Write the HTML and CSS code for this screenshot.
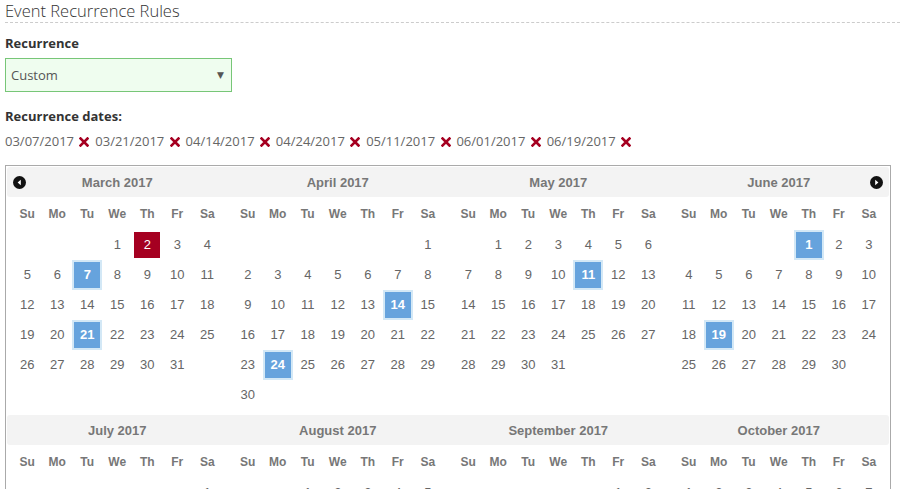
FILE: index.html
```html
<!DOCTYPE html>
<html lang="en">
<head>
    <meta charset="UTF-8">
    <meta name="viewport" content="width=device-width, initial-scale=1.0">
    <title>Event Recurrence Rules</title>
    <link rel="stylesheet" href="styles.css">
</head>
<body>
    <div class="page">
        <h3 class="section-title">Event Recurrence Rules</h3>

        <div class="field">
            <label class="field-label">Recurrence</label>
            <div class="select-box">
                <span>Custom</span>
                <span class="select-arrow">&#9660;</span>
            </div>
        </div>

        <div class="field">
            <label class="field-label">Recurrence dates:</label>
            <div class="date-list" id="date-list"></div>
        </div>

        <div class="datepicker" id="datepicker"></div>
    </div>

    <script>
        const selected = ['03/07/2017', '03/21/2017', '04/14/2017', '04/24/2017', '05/11/2017', '06/01/2017', '06/19/2017'];
        const today = '03/02/2017';
        const monthNames = ['January', 'February', 'March', 'April', 'May', 'June', 'July', 'August', 'September', 'October', 'November', 'December'];
        const dayNames = ['Su', 'Mo', 'Tu', 'We', 'Th', 'Fr', 'Sa'];

        const removeIcon = '<svg class="remove" width="10" height="10" viewBox="0 0 10 10"><path d="M1.5 1.5L8.5 8.5M8.5 1.5L1.5 8.5" stroke="#a50021" stroke-width="2.6" stroke-linecap="square"/></svg>';
        const prevIcon = '<svg width="13" height="13" viewBox="0 0 13 13"><circle cx="6.5" cy="6.5" r="6.5" fill="#111"/><path d="M7.8 3.8L4.6 6.5L7.8 9.2Z" fill="#fff"/></svg>';
        const nextIcon = '<svg width="13" height="13" viewBox="0 0 13 13"><circle cx="6.5" cy="6.5" r="6.5" fill="#111"/><path d="M5.2 3.8L8.4 6.5L5.2 9.2Z" fill="#fff"/></svg>';

        document.getElementById('date-list').innerHTML = selected
            .map(d => `<span class="date-item">${d} ${removeIcon}</span>`)
            .join(' ');

        function pad(n) {
            return n < 10 ? '0' + n : '' + n;
        }

        function buildMonth(year, month, pos) {
            const first = new Date(year, month, 1).getDay();
            const total = new Date(year, month + 1, 0).getDate();
            let cells = [];
            for (let i = 0; i < first; i++) cells.push('<td></td>');
            for (let d = 1; d <= total; d++) {
                const key = `${pad(month + 1)}/${pad(d)}/${year}`;
                let cls = '';
                if (selected.includes(key)) cls = 'selected';
                if (key === today) cls = 'today';
                cells.push(`<td><span class="day ${cls}">${d}</span></td>`);
            }
            let rows = '';
            for (let i = 0; i < cells.length; i += 7) {
                rows += '<tr>' + cells.slice(i, i + 7).join('') + '</tr>';
            }
            let nav = '';
            if (pos === 'first') nav = `<span class="nav nav-prev">${prevIcon}</span>`;
            if (pos === 'last') nav = `<span class="nav nav-next">${nextIcon}</span>`;
            return `
                <div class="month">
                    <div class="month-header">${nav}${monthNames[month]} ${year}</div>
                    <table class="month-table">
                        <thead><tr>${dayNames.map(n => `<th>${n}</th>`).join('')}</tr></thead>
                        <tbody>${rows}</tbody>
                    </table>
                </div>`;
        }

        let html = '';
        for (let r = 0; r < 2; r++) {
            html += '<div class="month-row">';
            for (let c = 0; c < 4; c++) {
                const m = 2 + r * 4 + c;
                let pos = '';
                if (r === 0 && c === 0) pos = 'first';
                if (r === 0 && c === 3) pos = 'last';
                html += buildMonth(2017, m, pos);
            }
            html += '</div>';
        }
        document.getElementById('datepicker').innerHTML = html;
    </script>
</body>
</html>
```

FILE: styles.css
```css
body {
    margin: 0;
    font-family: "Open Sans", "Liberation Sans", Arial, sans-serif;
    font-size: 13px;
    color: #333;
    background-color: #fff;
}

.page {
    padding-left: 5px;
}

.section-title {
    margin: 0;
    font-size: 16.5px;
    font-weight: 300;
    line-height: 22px;
    color: #333;
    border-bottom: 1px dashed #ccc;
}

.field {
    margin-top: 11px;
}

.field + .field {
    margin-top: 15px;
}

.field-label {
    display: block;
    font-weight: bold;
    line-height: 18px;
    color: #333;
}

/* 下拉選單 */
.select-box {
    display: flex;
    justify-content: space-between;
    align-items: center;
    width: 227px;
    height: 34px;
    margin-top: 6px;
    padding: 0 7px 0 5px;
    box-sizing: border-box;
    background-color: #effdef;
    border: 1px solid #77c677;
    color: #555;
}

.select-arrow {
    font-size: 9px;
    color: #555;
    font-family: "DejaVu Sans", sans-serif;
}

.date-list {
    margin-top: 7px;
    line-height: 18px;
    color: #666;
}

.date-item {
    white-space: nowrap;
}

.remove {
    vertical-align: -1px;
    margin-left: 2px;
    margin-right: 2.5px;
}

/* 日曆 */
.datepicker {
    width: 886px;
    margin-top: 15px;
    padding: 1px;
    box-sizing: border-box;
    border: 1px solid #aaa;
    font-family: "Liberation Sans", Arial, sans-serif;
}

.month-row {
    display: flex;
    margin-bottom: 5px;
}

.month {
    flex: 1;
}

.month-header {
    position: relative;
    height: 30px;
    line-height: 31px;
    text-align: center;
    font-weight: bold;
    font-size: 13px;
    color: #777;
    background-color: #f3f3f3;
}

.month:first-child .month-header {
    border-radius: 3px 0 0 3px;
}

.month:last-child .month-header {
    border-radius: 0 3px 3px 0;
}

.nav {
    position: absolute;
    top: 9px;
    line-height: 0;
}

.nav-prev {
    left: 6px;
}

.nav-next {
    right: 6px;
}

.month-table {
    width: 210px;
    margin: 0 auto;
    border-collapse: collapse;
    table-layout: fixed;
}

.month-table th,
.month-table td {
    width: 30px;
    height: 30px;
    padding: 0;
    text-align: center;
}

.month-table th {
    height: 33px;
    font-size: 12px;
    font-weight: bold;
    color: #777;
}

.month-table td {
    font-size: 13px;
    color: #666;
}

.day {
    display: inline-block;
    width: 30px;
    height: 30px;
    line-height: 30px;
    box-sizing: border-box;
    vertical-align: middle;
}

.day.selected {
    background-color: #66a3dd;
    border: 2px solid #d3e8f6;
    line-height: 26px;
    color: #fff;
    font-weight: bold;
}

.day.today {
    background-color: #a50021;
    border: 2px solid #fff;
    line-height: 26px;
    color: #fff;
}
```
